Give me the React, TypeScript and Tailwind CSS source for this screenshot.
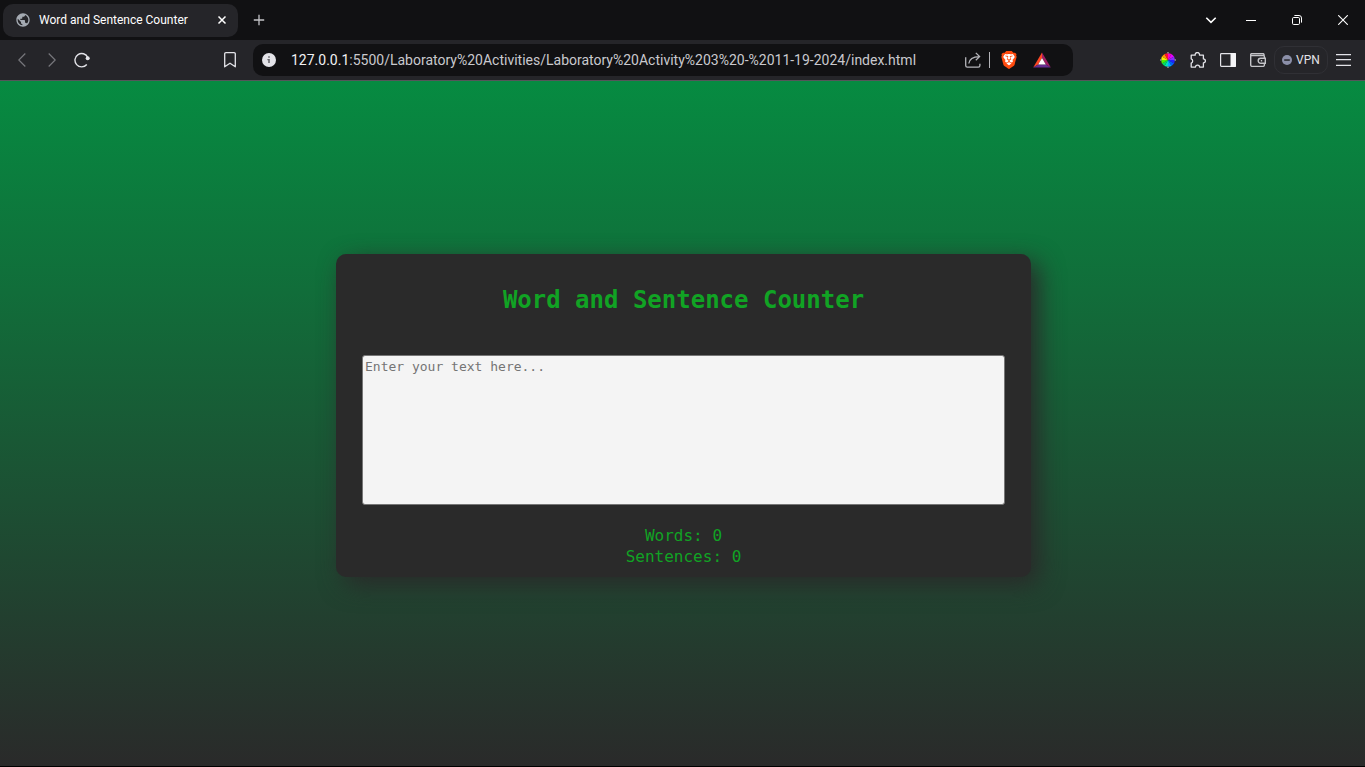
import { useState } from 'react';
import type { ReactNode } from 'react';
import { MdPublic } from 'react-icons/md';
import { SiBrave } from 'react-icons/si';

function IconButton({ label, className = 'w-[30px]', children }: { label: string; className?: string; children: ReactNode }) {
  return (
    <button type="button" aria-label={label} className={`flex h-[30px] shrink-0 items-center justify-center ${className}`}>
      {children}
    </button>
  );
}

function TitleBar() {
  return (
    <header className="flex h-10 shrink-0 items-center bg-[#111113] text-white">
      <div className="ml-[3px] flex h-[33px] w-[235px] items-center rounded-[10px] bg-[#252529] pl-3">
        <MdPublic size={16} className="shrink-0 text-[#a4aab2]" />
        <span className="ml-2 flex-1 whitespace-nowrap text-[12px] leading-4">Word and Sentence Counter</span>
        <IconButton label="Close tab" className="w-8">
          <svg width="10" height="10" viewBox="0 0 10 10" fill="none" stroke="currentColor" strokeWidth="1.5">
            <path d="M1.5 1.5l7 7M8.5 1.5l-7 7" />
          </svg>
        </IconButton>
      </div>
      <IconButton label="New tab" className="ml-1 w-[34px]">
        <svg width="12" height="12" viewBox="0 0 12 12" fill="none" stroke="#c4c4c8" strokeWidth="1.3">
          <path d="M6 .8v10.4M.8 6h10.4" />
        </svg>
      </IconButton>
      <div className="ml-auto flex">
        <IconButton label="Search tabs" className="w-[34px]">
          <svg width="12" height="12" viewBox="0 0 12 12" fill="none" stroke="currentColor" strokeWidth="1.6">
            <path d="M1.3 3.8L6 8.4l4.7-4.6" />
          </svg>
        </IconButton>
        <IconButton label="Minimize" className="w-[46px]">
          <svg width="10" height="10" viewBox="0 0 10 10" fill="currentColor">
            <path d="M0 5h10v1H0z" />
          </svg>
        </IconButton>
        <IconButton label="Restore" className="w-[46px]">
          <svg width="10" height="10" viewBox="0 0 10 10" fill="none" stroke="currentColor">
            <rect x=".5" y="2.5" width="7" height="7" rx="1.2" />
            <path d="M2.4.5H7a2.5 2.5 0 0 1 2.5 2.5v4.6" />
          </svg>
        </IconButton>
        <IconButton label="Close window" className="w-[45px]">
          <svg width="10" height="10" viewBox="0 0 10 10" fill="none" stroke="currentColor" strokeWidth="1.1">
            <path d="M.2.2l9.6 9.6M9.8.2L.2 9.8" />
          </svg>
        </IconButton>
      </div>
    </header>
  );
}

function ColorWheel() {
  return (
    <svg width="16" height="16" viewBox="0 0 16 16">
      <path d="M8 8V1l3.5.9z" fill="#ff00c8" />
      <path d="M8 8l3.5-6.1L14.1 4.5z" fill="#e600ff" />
      <path d="M8 8l6.1-3.5L15 8z" fill="#8a2bff" />
      <path d="M8 8h7l-.9 3.5z" fill="#2222ff" />
      <path d="M8 8l6.1 3.5-2.6 2.6z" fill="#0060ff" />
      <path d="M8 8l3.5 6.1L8 15z" fill="#00a8ff" />
      <path d="M8 8v7l-3.5-.9z" fill="#00e0c0" />
      <path d="M8 8l-3.5 6.1-2.6-2.6z" fill="#00e060" />
      <path d="M8 8l-6.1 3.5L1 8z" fill="#50f000" />
      <path d="M8 8H1l.9-3.5z" fill="#f4f000" />
      <path d="M8 8L1.9 4.5l2.6-2.6z" fill="#ff9800" />
      <path d="M8 8L4.5 1.9 8 1z" fill="#ff1030" />
      <path d="M7 0h2v1.5H7zM7 14.5h2V16H7zM0 7h1.5v2H0zM14.5 7H16v2h-1.5z" fill="#77777c" />
    </svg>
  );
}

function AddressBar() {
  return (
    <div className="flex h-8 min-w-0 flex-1 items-center rounded-[10px] bg-[#111113] pl-[9px] pr-4">
      <button type="button" aria-label="View site information" className="shrink-0">
        <svg width="14" height="14" viewBox="0 0 14 14">
          <circle cx="7" cy="7" r="7" fill="#e3e3e8" />
          <path d="M6.2 3.2h1.6v1.6H6.2zM5.4 6h2.4v4H6.2V7.2h-.8z" fill="#66666c" />
        </svg>
      </button>
      <a
        href="#address"
        className="ml-[15px] min-w-0 flex-1 overflow-hidden whitespace-nowrap text-[14px] leading-5 text-[#c9c9ce]"
      >
        <span className="text-[#f1f1f4]">127.0.0.1</span>
        :5500/Laboratory%20Activities/Laboratory%20Activity%203%20-%2011-19-2024/index.html
      </a>
      <IconButton label="Share this page">
        <svg width="16" height="16" viewBox="0 0 16 16" fill="none" stroke="#b4b4b9" strokeWidth="1.3">
          <path d="M.7 5.3v8.2a1.6 1.6 0 0 0 1.6 1.6h11a1.6 1.6 0 0 0 1.6-1.6v-1.7" />
          <path d="M3.8 11.5c.5-4.3 3-6.7 10.5-6.9M10.8.9l3.8 3.7-3.8 3.6" />
        </svg>
      </IconButton>
      <span className="mx-px h-4 w-px shrink-0 bg-[#b4b4b9]" />
      <IconButton label="Brave Shields" className="w-[36px]">
        <svg width="18" height="18" viewBox="0 0 18 18">
          <path d="M4 3h10l1 3-2.5 7L9 16l-3.500-3L3 6z" fill="#fff" />
          <SiBrave x="0" y="0" size={18} color="#ff4b0f" />
        </svg>
      </IconButton>
      <IconButton label="Brave Rewards">
        <svg width="18" height="16" viewBox="0 0 18 16">
          <path d="M9 .5V6l-3.8 6.5L.2 15.5z" fill="#ff4724" />
          <path d="M9 .5l8.8 15-5-3L9 6z" fill="#9e1f63" />
          <path d="M.2 15.500l5-3h7.600l5 3z" fill="#662d91" />
          <path d="M9 6l3.800 6.500H5.200z" fill="#fff" />
        </svg>
      </IconButton>
    </div>
  );
}

function Toolbar() {
  return (
    <nav className="flex h-[41px] shrink-0 items-center border-b border-[#55555a] bg-[#252529] text-[#e3e3e8]">
      <IconButton label="Back" className="ml-[7px] w-[30px] text-[#77777c]">
        <svg width="8" height="14" viewBox="0 0 8 14" fill="none" stroke="currentColor" strokeWidth="1.2">
          <path d="M7.3.5L.8 7l6.5 6.5" />
        </svg>
      </IconButton>
      <IconButton label="Forward" className="w-[30px] text-[#77777c]">
        <svg width="8" height="14" viewBox="0 0 8 14" fill="none" stroke="currentColor" strokeWidth="1.2">
          <path d="M.7.5L7.2 7 .7 13.5" />
        </svg>
      </IconButton>
      <IconButton label="Reload">
        <svg width="16" height="16" viewBox="0 0 16 16" fill="none" stroke="currentColor" strokeWidth="1.4">
          <path d="M13.8 5.5A6.7 6.7 0 1 0 12.8 12.5" />
          <circle cx="13.700" cy="6.300" r="2" fill="currentColor" stroke="none" />
        </svg>
      </IconButton>
      <span className="w-[118px] shrink" />
      <IconButton label="Bookmark this page" className="mr-2 w-[30px]">
        <svg width="12" height="16" viewBox="0 0 12 16" fill="none" stroke="currentColor" strokeWidth="1.3">
          <path d="M1.9.7h8.2a1.2 1.2 0 0 1 1.2 1.2v12.9L6 11.2.7 14.8V1.9A1.2 1.2 0 0 1 1.9.7z" strokeLinejoin="round" />
        </svg>
      </IconButton>
      <AddressBar />
      <span className="w-20 shrink" />
      <IconButton label="Color picker">
        <ColorWheel />
      </IconButton>
      <IconButton label="Extensions">
        <svg width="16" height="16" viewBox="0 0 16 16" fill="none" stroke="currentColor" strokeWidth="1.3" strokeLinejoin="round">
          <path d="M1.2 3.2h4a2.2 2.2 0 1 1 4.3 0h3.9v3.7a2 2 0 1 1 0 4v4.2H9.6a2 2 0 0 0-4.1 0H1.2v-4a2.3 2.3 0 0 0 0-4.3z" />
        </svg>
      </IconButton>
      <IconButton label="Sidebar">
        <svg width="16" height="14" viewBox="0 0 16 14">
          <rect x=".6" y=".6" width="14.8" height="12.8" rx=".8" fill="none" stroke="currentColor" strokeWidth="1.2" />
          <path d="M10.5 0h4.7a.8.8 0 0 1 .8.8v12.4a.8.8 0 0 1-.8.8h-4.7z" fill="#f5f5f7" />
        </svg>
      </IconButton>
      <IconButton label="Wallet" className="w-[30px] text-[#c4c4c8]">
        <svg width="16" height="14" viewBox="0 0 16 14" fill="none" stroke="currentColor" strokeWidth="1.4">
          <path d="M14.4 5V3.5a1 1 0 0 0-1-1H.7M14 2.5V1.6a1 1 0 0 0-1-1H1.7a1 1 0 0 0-1 1v10.3a1.5 1.5 0 0 0 1.5 1.5h10.7a1.5 1.5 0 0 0 1.5-1.500V10.500" />
          <path d="M15.3 5.3h-4.6a2.500 2.500 0 0 0 0 5h4.600zM10.800 7.800h1.400" />
        </svg>
      </IconButton>
      <button
        type="button"
        className="ml-px flex h-7 w-[54px] shrink-0 items-center justify-center gap-1 rounded-[10px] border border-[#303035] text-[12px] leading-4"
      >
        <svg width="10" height="10" viewBox="0 0 10 10">
          <circle cx="5" cy="5" r="5" fill="#8b8fa8" />
          <path d="M2.2 4.3h5.6v1.5H2.2z" fill="#252529" />
        </svg>
        VPN
      </button>
      <IconButton label="Menu" className="mr-[7px] w-[30px]">
        <svg width="16" height="12" viewBox="0 0 16 12" fill="currentColor">
          <path d="M1 0h15v1.200H1zM1 5h15v1.200H1zM1 10.800h15V12H1z" />
        </svg>
      </IconButton>
    </nav>
  );
}

function Counter() {
  const [text, setText] = useState('');
  const words = text.split(/\s+/).filter(Boolean).length;
  const sentences = text.split(/[.!?]+/).filter((part) => part.trim()).length;

  return (
    <main className="flex flex-1 items-center justify-center border-b border-black bg-linear-to-b/srgb from-[#068b41] to-[#2a2a2a] pb-4 pl-0.5 font-['DejaVu_Sans_Mono','Liberation_Mono',monospace]">
      <section className="flex w-full max-w-[695px] flex-col rounded-[10px] bg-[#2a2a2a] px-[26px] pb-[10px] pt-[30px] text-center text-[#11a324] shadow-[8px_8px_24px_#2a2a2a]">
        <h1 className="text-[24px] font-bold leading-8">
          <label htmlFor="text">Word and Sentence Counter</label>
        </h1>
        <textarea
          id="text"
          value={text}
          onChange={(event) => setText(event.target.value)}
          placeholder="Enter your text here..."
          className="mt-[39px] h-[150px] w-full resize-none rounded-[3px] border border-[#767676] bg-[#f4f4f4] px-0.5 py-[3px] text-[13px] leading-4 text-black placeholder:text-[#757575]"
        />
        <p className="mt-5 text-[16px] leading-[21px]">Words: {words}</p>
        <p className="text-[16px] leading-[21px]">Sentences: {sentences}</p>
      </section>
    </main>
  );
}

export default function App() {
  return (
    <div className="flex min-h-screen flex-col font-['Roboto','Open_Sans',sans-serif]">
      <TitleBar />
      <Toolbar />
      <Counter />
    </div>
  );
}
